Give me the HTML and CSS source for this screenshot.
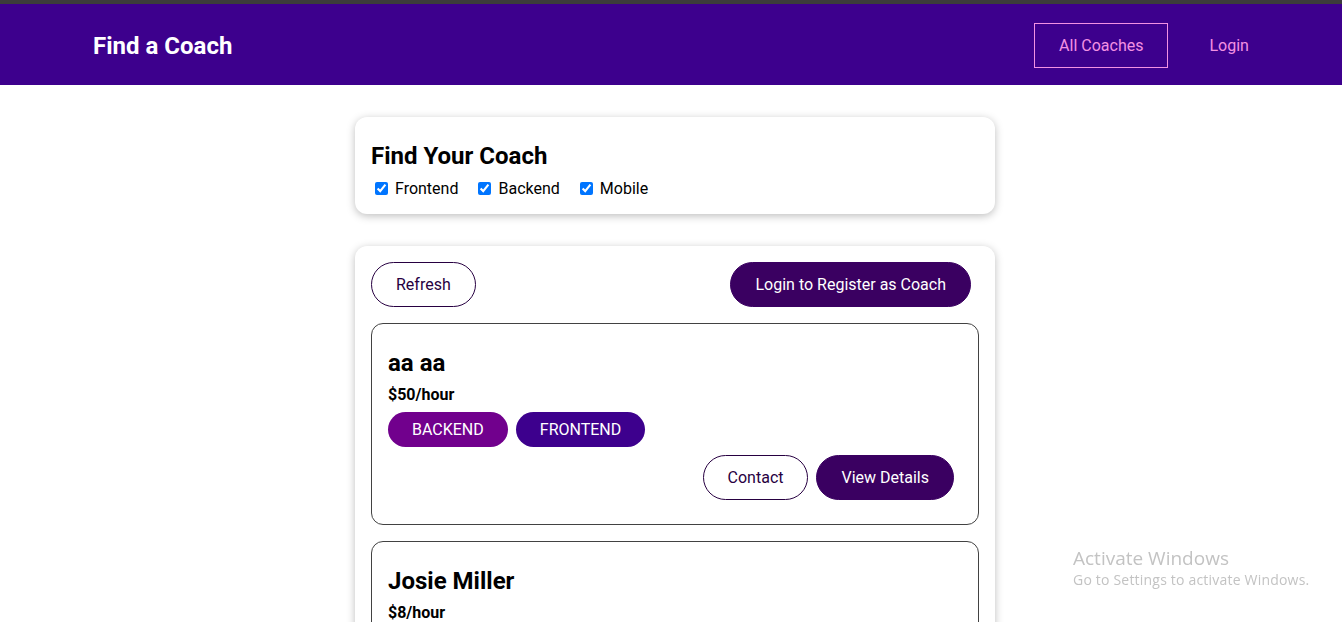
FILE: index.html
```html
<!DOCTYPE html>
<html lang="en">
<head>
<meta charset="utf-8">
<title>Find a Coach</title>
<link rel="stylesheet" href="styles.css">
</head>
<body>
<div class="topline"></div>
<header class="site-header">
  <nav class="site-nav">
    <h1 class="brand"><a href="#" class="brand-link">Find a Coach</a></h1>
    <ul class="nav-list">
      <li class="nav-item"><a href="#" class="nav-link active">All Coaches</a></li>
      <li class="nav-item"><a href="#" class="nav-link">Login</a></li>
    </ul>
  </nav>
</header>
<main class="main">
  <section class="card">
    <h2 class="filter-title">Find Your Coach</h2>
    <div class="filters"><span class="filter-option"><input type="checkbox" id="frontend" class="cb" checked><label for="frontend" class="cb-label">Frontend</label></span><span class="filter-option"><input type="checkbox" id="backend" class="cb" checked><label for="backend" class="cb-label">Backend</label></span><span class="filter-option"><input type="checkbox" id="mobile" class="cb" checked><label for="mobile" class="cb-label">Mobile</label></span></div>
  </section>
  <section class="card">
    <div class="controls">
      <button class="btn outline">Refresh</button>
      <button class="btn">Login to Register as Coach</button>
    </div>
    <ul class="coach-list">
      <li class="coach">
        <h3 class="coach-name">aa aa</h3>
        <h4 class="coach-rate">$50/hour</h4>
        <div class="badges"><span class="badge backend">BACKEND</span><span class="badge frontend">FRONTEND</span></div>
        <div class="actions">
          <button class="btn outline">Contact</button>
          <button class="btn">View Details</button>
        </div>
      </li>
      <li class="coach">
        <h3 class="coach-name">Josie Miller</h3>
        <h4 class="coach-rate">$8/hour</h4>
        <div class="badges"><span class="badge frontend">FRONTEND</span></div>
        <div class="actions">
          <button class="btn outline">Contact</button>
          <button class="btn">View Details</button>
        </div>
      </li>
    </ul>
  </section>
</main>
<div class="watermark">
  <div class="wm-title">Activate Windows</div>
  <div class="wm-sub">Go to Settings to activate Windows.</div>
</div>
</body>
</html>
```
FILE: styles.css
```css
* { box-sizing: border-box; }
html { font-family: Roboto, "Liberation Sans", sans-serif; font-size: 16px; line-height: 19px; }
body { margin: 0; background: #fff; color: #000; }

.topline { height: 4px; background: #3c3c3c; }

.site-header {
  height: 81px;
  background-color: #3d008d;
  display: flex;
  justify-content: center;
  align-items: center;
  padding-top: 2px;
}
.site-nav {
  width: 90%;
  margin: auto;
  display: flex;
  justify-content: space-between;
  align-items: center;
}
.brand { margin: 0 0 0 1px; font-size: 24px; line-height: 28px; font-weight: 700; }
.brand-link {
  color: #fff;
  text-decoration: none;
  display: inline-block;
  padding: 0.75rem 1.5rem;
  border: 1px solid transparent;
}
.nav-list { list-style: none; margin: 0 -7px 0 0; padding: 0; display: flex; align-items: center; }
.nav-item { margin: 0 0.5rem; }
.nav-link {
  text-decoration: none;
  color: #f391e3;
  display: inline-block;
  padding: 0.75rem 1.5rem;
  border: 1px solid transparent;
  font-size: 16px;
  line-height: 19px;
}
.nav-link.active { border-color: #f391e3; }

.main { padding-left: 8px; }

.card {
  border-radius: 12px;
  box-shadow: 0 2px 8px rgba(0, 0, 0, 0.26);
  padding: 1rem;
  margin: 2rem auto;
  max-width: 40rem;
  background: #fff;
}
.filter-title { margin: 9px 0 7px; font-size: 24px; line-height: 28px; font-weight: 700; }
.filters { line-height: 20px; padding-top: 1px; margin-bottom: -1px; }
.filter-option { margin-right: 1rem; }
.cb, .cb-label { vertical-align: middle; }
.cb { accent-color: #0075ff; }
.cb-label { margin-left: 0.25rem; font-size: 16px; }

.controls { display: flex; justify-content: space-between; }

.btn {
  font: inherit;
  font-size: 16px;
  line-height: 19px;
  padding: 0.75rem 1.5rem;
  background-color: #3a0061;
  border: 1px solid #3a0061;
  color: #fff;
  border-radius: 30px;
  margin-right: 0.5rem;
  display: inline-block;
  cursor: pointer;
}
.btn.outline { background: transparent; border-color: #270041; color: #270041; }

.coach-list { list-style: none; margin: 0; padding: 0; }
.coach {
  margin: 1rem 0;
  border: 1px solid #424242;
  border-radius: 12px;
  padding: 1rem;
}
.coach-name { font-size: 1.5rem; line-height: 28px; margin: 9px 0 8px; }
.coach-rate { margin: 0.5rem 0; font-size: 16px; line-height: 19px; }
.badges { margin: 0.5rem 0; }
.badge {
  display: inline-block;
  padding: 0.5rem 1.5rem;
  border-radius: 30px;
  margin-right: 0.5rem;
  color: #fff;
  font-size: 16px;
  line-height: 19px;
}
.badge.backend { background-color: #71008d; }
.badge.frontend { background-color: #3d008d; }
.actions { display: flex; justify-content: flex-end; margin: 0.5rem 0; }

.watermark {
  position: fixed;
  left: 1073px;
  top: 546px;
  color: #c3c3c3;
  font-family: "Open Sans", "Noto Sans", sans-serif;
}
.wm-title { font-size: 19px; line-height: 24px; }
.wm-sub { font-size: 14px; line-height: 20px; letter-spacing: 0.2px; }
```
